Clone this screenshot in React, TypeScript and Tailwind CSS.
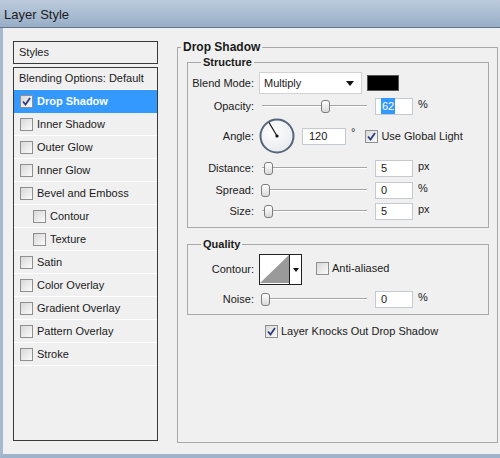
import React from 'react';

const font = { fontFamily: '"Liberation Sans", Arial, sans-serif' };

function Check({ checked = false }: { checked?: boolean }) {
  return (
    <span className="flex h-[13px] w-[13px] shrink-0 items-center justify-center border border-[#8e8f8f] bg-gradient-to-br from-[#d8d8d8] to-[#fbfbfb]">
      {checked ? (
        <svg width="11" height="11" viewBox="0 0 11 11">
          <path d="M2 5.5 L4.5 8.5 L9 2" fill="none" stroke="#2a3d7c" strokeWidth="1.8" />
        </svg>
      ) : null}
    </span>
  );
}

function Slider({ at }: { at: number }) {
  return (
    <div className="relative h-full w-[105px] shrink-0">
      <div className="absolute left-0 right-0 top-[8px] h-[2px] border-t border-[#a6a6a6] border-b border-b-white" />
      <div
        className="absolute top-[3px] h-[13px] w-[9px] rounded-[3px] border border-[#7d7d7d] bg-gradient-to-b from-white to-[#d9d9d9]"
        style={{ left: at }}
      />
    </div>
  );
}

function Field({ value, unit, selected = false }: { value: string; unit: string; selected?: boolean }) {
  return (
    <>
      <div className="ml-[8px] flex h-[17px] w-[38px] shrink-0 items-center border border-[#c5c9d0] bg-white pl-[5px] text-[11px]">
        {selected ? <span className="bg-[#3399ff] px-[1px] text-white">{value}</span> : value}
      </div>
      <span className="ml-[5px] -mt-[3px] text-[11px]">{unit}</span>
    </>
  );
}

function SliderRow({ label, at, value, unit, selected }: { label: string; at: number; value: string; unit: string; selected?: boolean }) {
  return (
    <div className="flex h-[18px] items-center">
      <span className="w-[66px] shrink-0 text-right text-[11px]">{label}</span>
      <div className="ml-[8px] h-full">
        <Slider at={at} />
      </div>
      <Field value={value} unit={unit} selected={selected} />
    </div>
  );
}

const styles: { name: string; sub?: boolean }[] = [
  { name: 'Inner Shadow' },
  { name: 'Outer Glow' },
  { name: 'Inner Glow' },
  { name: 'Bevel and Emboss' },
  { name: 'Contour', sub: true },
  { name: 'Texture', sub: true },
  { name: 'Satin' },
  { name: 'Color Overlay' },
  { name: 'Gradient Overlay' },
  { name: 'Pattern Overlay' },
  { name: 'Stroke' },
];

export default function App() {
  return (
    <div className="flex h-[458px] w-[500px] flex-col overflow-hidden bg-[#f0f0f0] text-[#1a1a1a]" style={font}>
      <div className="h-[28px] shrink-0 border-b border-[#5f728a] bg-gradient-to-b from-[#bccbdc] to-[#98aec7] pl-[4px] pt-[5px] text-[13px] text-[#1c1c1c]">
        Layer Style
      </div>

      <div className="flex flex-1 border-l-[3px] border-b-[4px] border-l-[#a6b9cf] border-b-[#9fb3ca] pl-[10px] pt-[13px]">
        {/* styles list */}
        <div className="flex w-[145px] shrink-0 flex-col">
          <div className="flex h-[23px] items-center border border-[#3a3a3a] pl-[5px] text-[11px]">Styles</div>
          <div className="mt-[3px] h-[374px] border border-[#3a3a3a] text-[11px]">
            <div className="flex h-[22px] items-center border-b border-white pl-[5px]">Blending Options: Default</div>
            <div className="flex h-[23px] items-center gap-[4px] bg-[#3399ff] pl-[6px] font-bold text-white">
              <Check checked />
              Drop Shadow
            </div>
            {styles.map((s) => (
              <div
                key={s.name}
                className={
                  s.sub
                    ? 'flex h-[23px] items-center gap-[4px] border-b border-white pl-[19px]'
                    : 'flex h-[23px] items-center gap-[4px] border-b border-white pl-[6px]'
                }
              >
                <Check />
                {s.name}
              </div>
            ))}
          </div>
        </div>

        {/* options */}
        <fieldset className="ml-[19px] h-[402px] w-[321px] shrink-0 border border-[#a9a9a9]">
          <legend className="ml-[3px] px-[2px] text-[12px] font-bold leading-[12px]">Drop Shadow</legend>

          <fieldset className="ml-[9px] mt-[3px] h-[172px] w-[302px] border border-[#a9a9a9]">
            <legend className="ml-[13px] px-[2px] text-[11px] font-bold leading-[12px]">Structure</legend>

            <div className="mt-[4px] flex h-[22px] items-center">
              <span className="w-[66px] shrink-0 text-right text-[11px]">Blend Mode:</span>
              <div className="ml-[5px] flex h-[22px] w-[103px] items-center justify-between border border-[#d2d2d2] bg-white pl-[4px] pr-[7px] text-[11px]">
                Multiply
                <svg width="8" height="5" viewBox="0 0 8 5">
                  <path d="M0 0 H8 L4 5 Z" fill="#111" />
                </svg>
              </div>
              <div className="ml-[5px] h-[16px] w-[32px] border border-[#555] bg-black" />
            </div>

            <div className="mt-[3px]">
              <SliderRow label="Opacity:" at={59} value="62" unit="%" selected />
            </div>

            <div className="mt-[3px] flex h-[36px] items-center">
              <span className="w-[66px] shrink-0 text-right text-[11px]">Angle:</span>
              <svg className="ml-[5px] shrink-0" width="36" height="36" viewBox="0 0 36 36">
                <defs>
                  <radialGradient id="dial" cx="0.4" cy="0.35" r="0.7">
                    <stop offset="0" stopColor="#ffffff" />
                    <stop offset="1" stopColor="#e6e9ee" />
                  </radialGradient>
                </defs>
                <circle cx="18" cy="18" r="16.5" fill="url(#dial)" stroke="#56657c" strokeWidth="2" />
                <line x1="18" y1="18" x2="10" y2="4.5" stroke="#111" strokeWidth="1.2" />
                <circle cx="18" cy="18" r="1.6" fill="#111" />
              </svg>
              <div className="ml-[7px] flex h-[17px] w-[44px] shrink-0 items-center border border-[#c5c9d0] bg-white pl-[6px] text-[11px]">120</div>
              <span className="ml-[5px] -mt-[8px] text-[11px]">°</span>
              <span className="ml-[10px]">
                <Check checked />
              </span>
              <span className="ml-[3px] text-[11px]">Use Global Light</span>
            </div>

            <div className="mt-[5px]">
              <SliderRow label="Distance:" at={2} value="5" unit="px" />
            </div>
            <div className="mt-[4px]">
              <SliderRow label="Spread:" at={-1} value="0" unit="%" />
            </div>
            <div className="mt-[3px]">
              <SliderRow label="Size:" at={2} value="5" unit="px" />
            </div>
          </fieldset>

          <fieldset className="ml-[9px] mt-[10px] h-[77px] w-[302px] border border-[#a9a9a9]">
            <legend className="ml-[13px] px-[2px] text-[11px] font-bold leading-[12px]">Quality</legend>

            <div className="mt-[4px] flex h-[31px] items-center">
              <span className="w-[66px] shrink-0 text-right text-[11px]">Contour:</span>
              <div className="ml-[5px] flex h-[31px] w-[43px] shrink-0 border-[1.5px] border-[#222] bg-white">
                <svg width="29" height="28" viewBox="0 0 29 28" className="shrink-0">
                  <path d="M0 28 L29 0 V28 Z" fill="#9a9a9a" />
                </svg>
                <div className="flex flex-1 items-center justify-center border-l border-[#222]">
                  <svg width="6" height="4" viewBox="0 0 6 4">
                    <path d="M0 0 H6 L3 4 Z" fill="#111" />
                  </svg>
                </div>
              </div>
              <span className="ml-[14px] -mt-[3px]">
                <Check />
              </span>
              <span className="ml-[3px] -mt-[3px] text-[11px]">Anti-aliased</span>
            </div>

            <div className="mt-[5px]">
              <SliderRow label="Noise:" at={-1} value="0" unit="%" />
            </div>
          </fieldset>

          <div className="ml-[87px] mt-[8px] flex items-center">
            <Check checked />
            <span className="ml-[3px] text-[11px]">Layer Knocks Out Drop Shadow</span>
          </div>
        </fieldset>
      </div>
    </div>
  );
}
